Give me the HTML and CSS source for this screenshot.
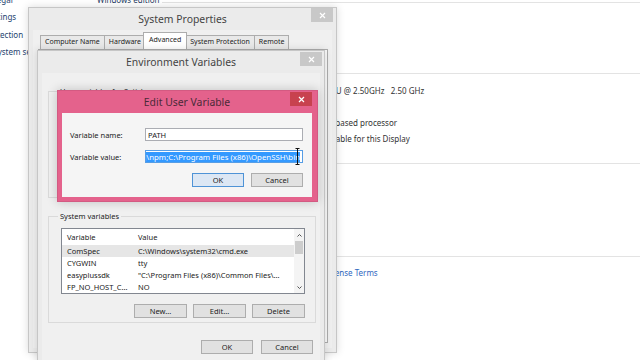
FILE: index.html
```html
<!DOCTYPE html>
<html lang="en">
<head>
    <meta charset="UTF-8">
    <meta name="viewport" content="width=device-width, initial-scale=1.0">
    <title>System Properties - Environment Variables</title>
    <link rel="stylesheet" href="styles.css">
</head>
<body>
<div class="desktop">
    <!-- Control Panel > System, behind the dialogs -->
    <aside class="side">
        <a href="#">Microsoft Legal</a>
        <a href="#">Remote settings</a>
        <a href="#">System protection</a>
        <a href="#">Advanced system settings</a>
    </aside>
    <main class="sys">
        <section>
            <h2 class="sec-head">Windows edition</h2>
            <div class="rows rows-edition">
                <div class="row">Windows 8 Pro</div>
                <div class="row">© 2012 Microsoft Corporation. All rights reserved.</div>
                <div class="row">Get more features with a new edition of Windows</div>
            </div>
        </section>
        <section>
            <h2 class="sec-head">System</h2>
            <div class="rows">
                <div class="row"><span class="k">Processor:</span><span>Intel(R) Core(TM) i5-3210M CPU @ 2.50GHz&nbsp;&nbsp; 2.50 GHz</span></div>
                <div class="row"><span class="k">Installed memory (RAM):</span><span>4.00 GB</span></div>
                <div class="row"><span class="k">System type:</span><span>64-bit Operating System, x64-based processor</span></div>
                <div class="row"><span class="k">Pen and Touch:</span><span>No Pen or Touch Input is available for this Display</span></div>
            </div>
        </section>
        <section>
            <h2 class="sec-head">Computer name, domain, and workgroup settings</h2>
            <div class="rows rows-computer">
                <div class="row"><span class="k">Computer name:</span><span>Satish-PC</span></div>
                <div class="row"><span class="k">Full computer name:</span><span>Satish-PC</span></div>
                <div class="row"><span class="k">Computer description:</span><span></span></div>
                <div class="row"><span class="k">Workgroup:</span><span>WORKGROUP</span></div>
            </div>
        </section>
        <section>
            <h2 class="sec-head">Windows activation</h2>
            <div class="rows rows-activation">
                <div class="row"><span>Windows is activated</span><a href="#">Read the Microsoft Software License Terms</a></div>
            </div>
        </section>
    </main>

    <!-- System Properties -->
    <div class="win props">
        <div class="win-title">System Properties
            <span class="win-x"><svg width="7" height="7" viewBox="0 0 7 7"><path d="M1 1L6 6M6 1L1 6" stroke="#fff" stroke-width="1.2"/></svg></span>
        </div>
        <div class="win-body">
            <div class="tabs">
                <span class="tab">Computer Name</span>
                <span class="tab">Hardware</span>
                <span class="tab on">Advanced</span>
                <span class="tab">System Protection</span>
                <span class="tab">Remote</span>
            </div>
            <div class="tab-panel"></div>
        </div>
    </div>

    <!-- Environment Variables -->
    <div class="win env">
        <div class="win-title">Environment Variables
            <span class="win-x"><svg width="7" height="7" viewBox="0 0 7 7"><path d="M1 1L6 6M6 1L1 6" stroke="#fff" stroke-width="1.2"/></svg></span>
        </div>
        <div class="win-body">
            <fieldset class="grp">
                <legend>User variables for Satish</legend>
                <div class="lv">
                    <div class="lv-main">
                        <div class="lv-row lv-head"><span class="c1">Variable</span><span class="c2">Value</span></div>
                        <div class="lv-row"><span class="c1">PATH</span><span class="c2">C:\Users\Satish\AppData\Roaming\npm;C:\Program Files (x86)\OpenSSH\bin</span></div>
                        <div class="lv-row"><span class="c1">TEMP</span><span class="c2">%USERPROFILE%\AppData\Local\Temp</span></div>
                        <div class="lv-row"><span class="c1">TMP</span><span class="c2">%USERPROFILE%\AppData\Local\Temp</span></div>
                    </div>
                </div>
                <div class="btns">
                    <button class="btn">New...</button>
                    <button class="btn">Edit...</button>
                    <button class="btn">Delete</button>
                </div>
            </fieldset>
            <fieldset class="grp">
                <legend>System variables</legend>
                <div class="lv">
                    <div class="lv-main">
                        <div class="lv-row lv-head"><span class="c1">Variable</span><span class="c2">Value</span></div>
                        <div class="lv-row sel"><span class="c1">ComSpec</span><span class="c2">C:\Windows\system32\cmd.exe</span></div>
                        <div class="lv-row"><span class="c1">CYGWIN</span><span class="c2">tty</span></div>
                        <div class="lv-row"><span class="c1">easyplussdk</span><span class="c2">"C:\Program Files (x86)\Common Files\...</span></div>
                        <div class="lv-row"><span class="c1">FP_NO_HOST_C...</span><span class="c2">NO</span></div>
                    </div>
                    <div class="vscroll">
                        <span class="arr"><svg width="5" height="3" viewBox="0 0 5 3"><path d="M0.5 2.5L2.5 0.5L4.5 2.5" fill="none" stroke="#555"/></svg></span>
                        <span class="thumb"></span>
                        <span class="track"></span>
                        <span class="arr"><svg width="5" height="3" viewBox="0 0 5 3"><path d="M0.5 0.5L2.5 2.5L4.5 0.5" fill="none" stroke="#555"/></svg></span>
                    </div>
                </div>
                <div class="btns">
                    <button class="btn">New...</button>
                    <button class="btn">Edit...</button>
                    <button class="btn">Delete</button>
                </div>
            </fieldset>
            <div class="foot">
                <button class="btn">OK</button>
                <button class="btn">Cancel</button>
            </div>
        </div>
    </div>

    <!-- Edit User Variable -->
    <div class="win edit">
        <div class="win-title">Edit User Variable
            <span class="win-x"><svg width="7" height="7" viewBox="0 0 7 7"><path d="M1 1L6 6M6 1L1 6" stroke="#fff" stroke-width="1.2"/></svg></span>
        </div>
        <div class="win-body">
            <div class="field"><label>Variable name:</label><div class="inp">PATH</div></div>
            <div class="field"><label>Variable value:</label><div class="inp focus"><span class="hl">C:\Users\Satish\AppData\Roaming\npm;C:\Program Files (x86)\OpenSSH\bin</span></div></div>
            <div class="btns">
                <button class="btn def">OK</button>
                <button class="btn">Cancel</button>
            </div>
            <svg class="ibeam" width="5" height="17" viewBox="0 0 5 17"><path d="M0.5 0.5h4M2.5 0.5v16M0.5 16.5h4" fill="none" stroke="#111"/></svg>
        </div>
    </div>
</div>
</body>
</html>
```

FILE: styles.css
```css
* {
    box-sizing: border-box;
}

body {
    margin: 0;
    background: #fff;
    font-family: "Noto Sans", "DejaVu Sans", sans-serif;
    color: #222;
    overflow: hidden;
}

.desktop {
    position: relative;
    display: flex;
    width: 640px;
    height: 360px;
    overflow: hidden;
}

/* control panel page */
.side {
    flex: none;
    width: 142px;
    margin: -9px 0 0 -45px;
    display: flex;
    flex-direction: column;
}
.side a {
    font-size: 8px;
    line-height: 17.3px;
    color: #25436f;
    text-decoration: none;
    white-space: nowrap;
}

.sys {
    flex: 1;
    min-width: 0;
    margin-top: -9px;
    font-size: 8px;
    color: #333;
}
.sec-head {
    display: flex;
    align-items: center;
    gap: 3px;
    height: 16px;
    margin: 0;
    font-size: 8px;
    font-weight: normal;
    color: #1e3a62;
    white-space: nowrap;
}
.sec-head::after {
    content: "";
    flex: 1;
    height: 1px;
    margin-top: 6px;
    background: #e3e3e3;
}
.rows {
    padding: 5px 0 5px 12px;
}
.rows-edition {
    padding-bottom: 2px;
}
.rows-computer {
    padding-bottom: 8px;
}
.rows-activation {
    padding-top: 4px;
}
.row {
    display: flex;
    height: 16px;
    line-height: 16px;
    white-space: nowrap;
}
.row .k {
    flex: none;
    width: 115px;
}
.row a {
    margin-left: 29px;
    color: #2f67c0;
    text-decoration: none;
}

/* dialog windows */
.win {
    position: absolute;
    display: flex;
    flex-direction: column;
    padding: 0 4px 4px;
    background: #ebebeb;
    border: 1px solid #c6c6c6;
    box-shadow: 0 0 8px rgba(0, 0, 0, 0.15);
    font-size: 7.5px;
    color: #222;
}
.win-title {
    position: relative;
    flex: none;
    height: 22px;
    display: flex;
    align-items: center;
    justify-content: center;
    font-size: 10.4px;
    color: #444;
}
.win-x {
    position: absolute;
    top: 0;
    right: -1px;
    width: 22px;
    height: 14px;
    display: flex;
    align-items: center;
    justify-content: center;
    background: #c8c8c8;
}
.win-body {
    flex: 1;
    min-height: 0;
    display: flex;
    flex-direction: column;
    background: #f0f0f0;
    overflow: hidden;
}

.props {
    left: 28px;
    top: 7px;
    width: 309px;
    height: 346px;
}
.props .win-body {
    padding: 3px 4px 5px 5px;
}
.tabs {
    display: flex;
    align-items: flex-end;
    height: 16px;
    padding-left: 2px;
}
.tab {
    height: 14px;
    padding: 0 4px;
    margin-right: -1px;
    font-size: 7px;
    line-height: 12px;
    background: #e9e9e9;
    border: 1px solid #adadad;
    border-bottom: none;
    white-space: nowrap;
}
.tab.on {
    height: 17px;
    line-height: 14px;
    margin: 0 -1px 0 -2px;
    padding: 0 5px;
    background: #fff;
    position: relative;
}
.tab.on + .tab {
    margin-left: -1px;
}
.tab-panel {
    flex: 1;
    background: #fafafa;
    border: 1px solid #adadad;
}

.env {
    left: 37px;
    top: 50px;
    width: 288px;
    height: 320px;
}
.env .win-x {
    top: 1px;
    right: -2px;
}
.env .win-body {
    padding: 0 4px 0 6px;
}
.grp {
    margin: 12px 0 0;
    padding: 0 10px 4px 12px;
    border: 1px solid #dadada;
    min-inline-size: 0;
}
.grp legend {
    padding: 0 2px;
    margin-left: -3px;
    font-size: 7.5px;
    line-height: 12px;
}
.lv {
    display: flex;
    height: 66px;
    margin-top: 6px;
    background: #fff;
    border: 1px solid #828790;
}
.lv-main {
    flex: 1;
    min-width: 0;
    overflow: hidden;
}
.lv-row {
    display: flex;
    align-items: center;
    height: 12px;
    white-space: nowrap;
}
.lv-head {
    height: 16px;
}
.lv-row.sel {
    background: #e6e6e6;
}
.c1 {
    flex: none;
    width: 73px;
    padding-left: 5px;
    overflow: hidden;
}
.c2 {
    padding-left: 3px;
}
.vscroll {
    flex: none;
    width: 10px;
    display: flex;
    flex-direction: column;
    background: #f4f4f4;
}
.arr {
    height: 12px;
    display: flex;
    align-items: center;
    justify-content: center;
}
.thumb {
    height: 13px;
    margin: 0 1px;
    background: #cdcdcd;
}
.track {
    flex: 1;
}

.btns {
    display: flex;
    justify-content: flex-end;
    gap: 6px;
    margin-top: 10px;
}
.btn {
    width: 53px;
    height: 14px;
    padding: 0;
    font: inherit;
    color: #222;
    background: #e1e1e1;
    border: 1px solid #adadad;
}
.btn.def {
    background: #dce7f4;
    border-color: #4f93d6;
}
.foot {
    display: flex;
    justify-content: flex-end;
    gap: 8px;
    margin: 17px 3px 0 0;
}
.foot .btn {
    width: 52px;
}

.edit {
    left: 57px;
    top: 90px;
    width: 261px;
    height: 112px;
    padding: 0 5px 4px 4px;
    background: #e4628c;
    border-color: #d35a82;
    box-shadow: 0 0 10px rgba(0, 0, 0, 0.2);
}
.edit .win-title {
    color: #4a2a38;
}
.edit .win-x {
    top: 1px;
    right: 0;
    background: #c8424f;
}
.edit .win-body {
    position: relative;
    padding: 15px 9px 0 8px;
    background: #f5f5f5;
}
.field {
    display: flex;
    align-items: center;
    height: 13px;
}
.field + .field {
    margin-top: 9px;
}
.field label {
    flex: none;
    width: 75px;
}
.inp {
    width: 158px;
    height: 13px;
    display: flex;
    align-items: center;
    padding: 0 2px;
    background: #fff;
    border: 1px solid #abadb3;
    overflow: hidden;
    white-space: nowrap;
}
.inp.focus {
    justify-content: flex-end;
    border-color: #569de5;
}
.hl {
    flex: none;
    font-size: 7.8px;
    background: #3399ff;
    color: #fff;
}
.edit .btns {
    gap: 7px;
}
.edit .btn {
    width: 52px;
}
.ibeam {
    position: absolute;
    left: 233px;
    top: 35px;
}
```
